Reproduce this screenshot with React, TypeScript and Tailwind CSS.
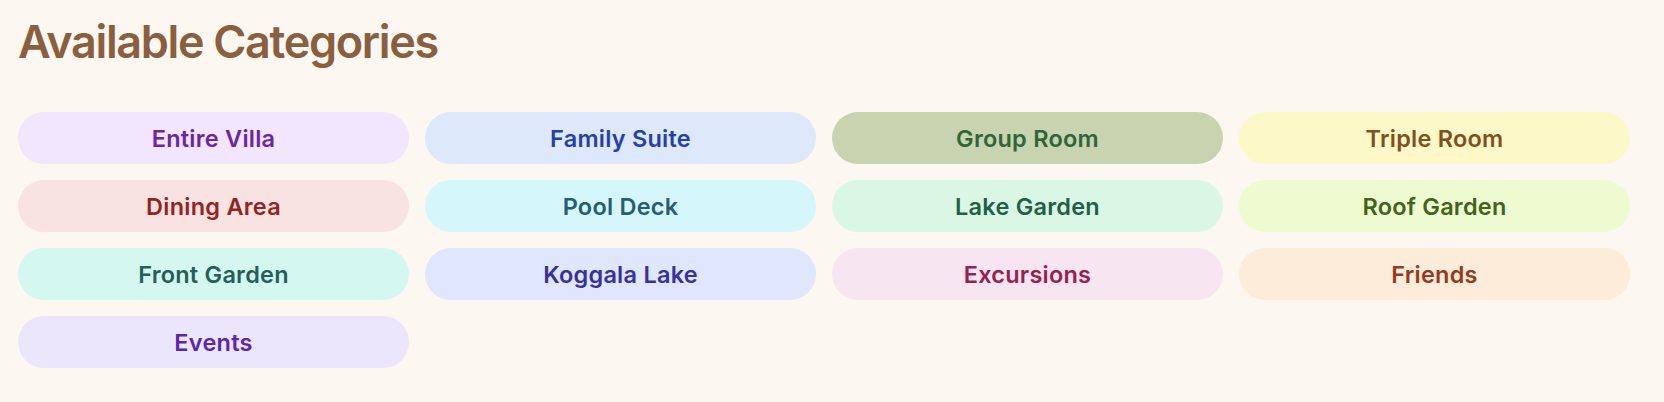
const categories = [
  { name: "Entire Villa", bg: "bg-[#f1e6fd]", text: "text-[#6b25a6]" },
  { name: "Family Suite", bg: "bg-[#dde8fb]", text: "text-[#2540a8]" },
  { name: "Group Room", bg: "bg-[#c8d3b0]", text: "text-[#2f6538]" },
  { name: "Triple Room", bg: "bg-[#fdf8c8]", text: "text-[#83501c]" },
  { name: "Dining Area", bg: "bg-[#f9e3e2]", text: "text-[#962322]" },
  { name: "Pool Deck", bg: "bg-[#d5f6fb]", text: "text-[#255e72]" },
  { name: "Lake Garden", bg: "bg-[#daf7e6]", text: "text-[#225f47]" },
  { name: "Roof Garden", bg: "bg-[#eefbd1]", text: "text-[#42631b]" },
  { name: "Front Garden", bg: "bg-[#d4f8ef]", text: "text-[#255f5a]" },
  { name: "Koggala Lake", bg: "bg-[#e0e6fb]", text: "text-[#37309e]" },
  { name: "Excursions", bg: "bg-[#f7e6f1]", text: "text-[#982150]" },
  { name: "Friends", bg: "bg-[#fdecd9]", text: "text-[#963a1d]" },
  { name: "Events", bg: "bg-[#ebe6fb]", text: "text-[#5b26b0]" },
];

export default function App() {
  return (
    <div
      className="min-h-screen bg-[#fcf7f1] pl-[18px] pr-[34px] pt-[14px] pb-8"
      style={{ fontFamily: "Inter, 'Noto Sans', sans-serif" }}
    >
      {/* Heading */}
      <h1 className="text-[45px] leading-[56px] font-semibold tracking-[-0.03em] text-[#8a5f3f] mb-[42px]">
        Available Categories
      </h1>

      {/* Category pills */}
      <div className="grid grid-cols-4 gap-4">
        {categories.map((c) => (
          <div
            key={c.name}
            className={`h-[52px] rounded-full flex items-center justify-center pt-px text-[23.5px] font-semibold tracking-[0.01em] ${c.bg} ${c.text}`}
          >
            {c.name}
          </div>
        ))}
      </div>
    </div>
  );
}
